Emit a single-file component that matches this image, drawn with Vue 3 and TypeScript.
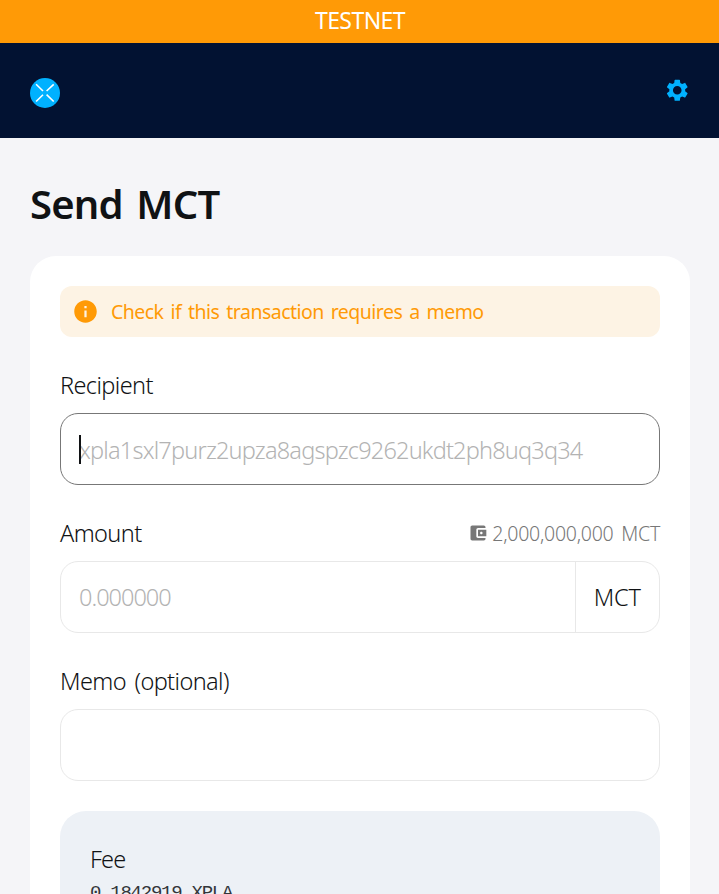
<script setup lang="ts">
import { ref } from 'vue'

const recipient = ref('')
const amount = ref('')
const memo = ref('')
const token = 'MCT'
const balance = '2,000,000,000'
</script>

<template>
  <div class="page">
    <div class="banner">TESTNET</div>

    <header class="header">
      <svg class="logo" viewBox="0 0 30 30">
        <circle cx="15" cy="15" r="15" fill="#00b1ff" />
        <path d="M6.1 6.3L13 13M23.7 6.3L16.6 13M6.1 23.5L13 16.7M23.7 23.5L16.6 16.7" stroke="#fff" stroke-width="1.6" />
      </svg>
      <svg class="gear" viewBox="0 0 24 24">
        <path fill="#00b1ff" d="M19.14 12.94c.04-.3.06-.61.06-.94 0-.32-.02-.64-.07-.94l2.03-1.58c.18-.14.23-.41.12-.61l-1.92-3.32c-.12-.22-.37-.29-.59-.22l-2.39.96c-.5-.38-1.03-.7-1.62-.94l-.36-2.54c-.04-.24-.24-.41-.48-.41h-3.84c-.24 0-.43.17-.47.41l-.36 2.54c-.59.24-1.13.57-1.62.94l-2.39-.96c-.22-.08-.47 0-.59.22L2.74 8.87c-.12.21-.08.47.12.61l2.03 1.58c-.05.3-.09.63-.09.94s.02.64.07.94l-2.03 1.58c-.18.14-.23.41-.12.61l1.92 3.32c.12.22.37.29.59.22l2.39-.96c.5.38 1.03.7 1.62.94l.36 2.54c.05.24.24.41.48.41h3.84c.24 0 .44-.17.47-.41l.36-2.54c.59-.24 1.13-.56 1.62-.94l2.39.96c.22.08.47 0 .59-.22l1.92-3.32c.12-.22.07-.47-.12-.61l-2.01-1.58zM12 15.9c-2.15 0-3.9-1.75-3.9-3.9s1.75-3.9 3.9-3.9 3.9 1.75 3.9 3.9-1.75 3.9-3.9 3.9z" />
      </svg>
    </header>

    <main class="main">
      <h1 class="title">Send {{ token }}</h1>

      <form class="card" @submit.prevent>
        <div class="notice">
          <svg class="info" viewBox="0 0 24 24">
            <path fill="#ff9a06" d="M12 2C6.48 2 2 6.48 2 12s4.48 10 10 10 10-4.48 10-10S17.52 2 12 2zm1 15h-2v-6h2v6zm0-8h-2V7h2v2z" />
          </svg>
          <span>Check if this transaction requires a memo</span>
        </div>

        <div class="field">
          <div class="label-row"><label for="recipient">Recipient</label></div>
          <div class="control focused">
            <span class="caret"></span>
            <input id="recipient" v-model="recipient" class="address" placeholder="xpla1sxl7purz2upza8agspzc9262ukdt2ph8uq3q34" />
          </div>
        </div>

        <div class="field">
          <div class="label-row">
            <label for="amount">Amount</label>
            <span class="balance">
              <svg class="wallet" viewBox="0 0 24 24">
                <path fill="#777" d="M21 18v1c0 1.1-.9 2-2 2H5c-1.11 0-2-.9-2-2V5c0-1.1.89-2 2-2h14c1.1 0 2 .9 2 2v1h-9c-1.11 0-2 .9-2 2v8c0 1.1.89 2 2 2h9zm-9-2h10V8H12v8zm4-2.5c-.83 0-1.5-.67-1.5-1.5s.67-1.5 1.5-1.5 1.5.67 1.5 1.5-.67 1.5-1.5 1.5z" />
              </svg>
              <span>{{ balance }} {{ token }}</span>
            </span>
          </div>
          <div class="control">
            <input id="amount" v-model="amount" class="number" placeholder="0.000000" />
            <span class="unit">{{ token }}</span>
          </div>
        </div>

        <div class="field">
          <div class="label-row"><label for="memo">Memo (optional)</label></div>
          <div class="control"><input id="memo" v-model="memo" /></div>
        </div>

        <dl class="fee">
          <dt>Fee</dt>
          <dd>0.1842919 XPLA</dd>
        </dl>
      </form>
    </main>
  </div>
</template>

<style>
body {
  margin: 0;
  overflow: hidden;
}
</style>

<style scoped>
.page {
  box-sizing: border-box;
  height: 894px;
  overflow: hidden;
  background: #f5f5f8;
  color: #101214;
  font-family: "Noto Sans", "Open Sans", sans-serif;
  font-size: 23.5px;
  font-weight: 350;
  letter-spacing: -0.6px;
}
.banner {
  height: 43px;
  line-height: 40px;
  background: #ff9a06;
  color: #fff;
  text-align: center;
  text-indent: 1px;
  font-size: 23px;
  font-weight: 380;
  letter-spacing: -0.55px;
}
.header {
  box-sizing: border-box;
  height: 95px;
  padding: 0 29px 0 30px;
  display: flex;
  align-items: center;
  justify-content: space-between;
  background: #021232;
}
.logo {
  width: 30px;
  height: 30px;
  margin-top: 5px;
}
.gear {
  width: 26.5px;
  height: 26.5px;
}
.main {
  padding: 41px 29px 0 30px;
}
.title {
  margin: 0 0 27px;
  font-size: 40px;
  font-weight: 600;
  line-height: 50px;
  letter-spacing: -0.8px;
  word-spacing: 4px;
}
.card {
  box-sizing: border-box;
  height: 900px;
  padding: 30px;
  border-radius: 26px;
  background: #fff;
}
.notice {
  box-sizing: border-box;
  display: flex;
  align-items: center;
  gap: 12px;
  height: 51px;
  padding: 0 12px;
  border-radius: 12px;
  background: #fdf3e4;
  color: #ff9a06;
  font-size: 19.5px;
  font-weight: 390;
  letter-spacing: -0.53px;
  word-spacing: 2.4px;
}
.info {
  width: 27px;
  height: 27px;
}
.field {
  margin-top: 29px;
}
.label-row {
  box-sizing: border-box;
  display: flex;
  align-items: center;
  justify-content: space-between;
  height: 36px;
  margin-bottom: 11px;
  padding-top: 2px;
  word-spacing: 3px;
}
.balance {
  display: flex;
  align-items: center;
  gap: 4px;
  color: #777;
  font-size: 19.5px;
  letter-spacing: -0.26px;
}
.wallet {
  width: 20px;
  height: 20px;
}
.control {
  position: relative;
  box-sizing: border-box;
  display: flex;
  height: 72px;
  border: 1px solid #e8e8e8;
  border-radius: 18px;
}
.control.focused {
  border-color: #777;
}
input {
  flex: 1;
  min-width: 0;
  padding: 0 18px;
  border: 0;
  outline: 0;
  background: transparent;
  color: inherit;
  font: inherit;
}
.address {
  padding-top: 2px;
  letter-spacing: -0.8px;
}
.number {
  letter-spacing: -1px;
}
input::placeholder {
  color: #b3b3b3;
  opacity: 1;
}
.caret {
  position: absolute;
  left: 18px;
  top: 21px;
  width: 2px;
  height: 29px;
  background: #101214;
}
.unit {
  display: flex;
  align-items: center;
  padding: 0 18px;
  border-left: 1px solid #e8e8e8;
  letter-spacing: -0.1px;
}
.fee {
  margin: 30px 0 0;
  padding: 30px;
  height: 200px;
  border-radius: 26px;
  background: #edf1f6;
}
.fee dt {
  line-height: 36px;
  letter-spacing: -0.8px;
}
.fee dd {
  margin: 0;
  color: #33363a;
  font-family: "Liberation Mono", monospace;
  font-size: 19px;
  line-height: 32px;
  letter-spacing: -1.25px;
}
</style>
